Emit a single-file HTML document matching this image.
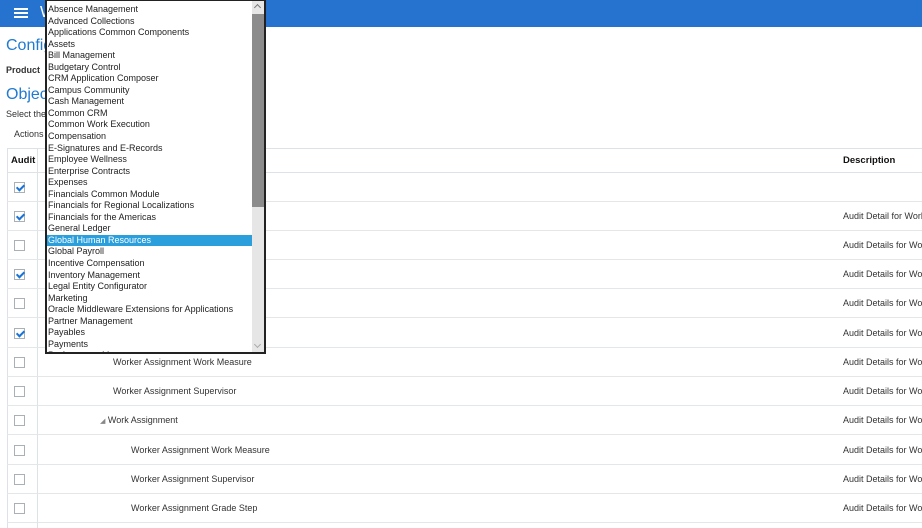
<!DOCTYPE html>
<html><head><style>
*{margin:0;padding:0;box-sizing:border-box}
body{width:922px;height:528px;overflow:hidden;background:#fff;font-family:"Liberation Sans",Arial,sans-serif;color:#333;position:relative}
.hdr{position:absolute;left:0;top:0;width:922px;height:27px;background:#2673cf}
.ham{position:absolute;left:14px;top:8px;width:14px;height:2px;background:#fff;box-shadow:0 4px 0 #fff,0 8px 0 #fff}
.t{position:absolute;white-space:nowrap}
.blue{color:#1f7ad1;font-size:16px}
.sm{font-size:9px;color:#333}
.row{position:absolute;left:7px;width:915px;height:29.2px;border-bottom:1px solid #e4e7ea}
.cb{position:absolute;left:7px;top:9px;width:11px;height:11px;border:1px solid #a9b0b6;background:#fff}
.cb.on::after{content:"";position:absolute;left:3px;top:0px;width:3px;height:6px;border:solid #1a73d6;border-width:0 2px 2px 0;transform:rotate(45deg)}
.nm{position:absolute;top:9px;font-size:9px;color:#333;white-space:nowrap}
.ds{position:absolute;left:836px;top:9px;font-size:9px;color:#333;white-space:nowrap}
.dd{position:absolute;left:45px;top:0;width:221px;height:354px;border:2px solid #222;border-top:1px solid #222;background:#fff;overflow:hidden}
.dd .it{height:11.55px;line-height:11.55px;font-size:9px;color:#222;padding-left:1px;white-space:nowrap;width:206px}
.dd .sel{background:#2a9fdc;color:#fff}
.sb{position:absolute;right:0;top:0;width:12px;height:352px;background:#e6e6e6}
.th{position:absolute;left:0;top:13px;width:12px;height:193px;background:#8c8c8c}
</style></head><body>
<div class="hdr"><div class="ham"></div><div class="t" style="left:40px;top:4px;color:#fff;font-size:16px">W</div></div>
<div class="t blue" style="left:6px;top:37px">Configure</div>
<div class="t sm" style="left:6px;top:65px;font-weight:bold">Product</div>
<div class="t blue" style="left:6px;top:86px">Object</div>
<div class="t sm" style="left:6px;top:109px">Select the</div>
<div class="t sm" style="left:14px;top:129px">Actions</div>
<div style="position:absolute;left:7px;top:148px;width:915px;height:380px;border-left:1px solid #dde2e6;border-top:1px solid #dde2e6"></div>
<div style="position:absolute;left:37px;top:148px;width:1px;height:380px;background:#dde2e6"></div>
<div style="position:absolute;left:7px;top:148px;width:915px;height:25px;border-bottom:1px solid #dde2e6">
<div class="t" style="left:4px;top:7px;font-size:9.5px;font-weight:bold;color:#111">Audit</div>
<div class="t" style="left:836px;top:7px;font-size:9.5px;font-weight:bold;color:#111">Description</div></div>
<div class="row" style="top:173px"><div class="cb on"></div></div>
<div class="row" style="top:202px"><div class="cb on"></div><div class="ds">Audit Detail for Work</div></div>
<div class="row" style="top:231px"><div class="cb"></div><div class="ds">Audit Details for Wo</div></div>
<div class="row" style="top:260px"><div class="cb on"></div><div class="ds">Audit Details for Wo</div></div>
<div class="row" style="top:289px"><div class="cb"></div><div class="ds">Audit Details for Wo</div></div>
<div class="row" style="top:319px"><div class="cb on"></div><div class="ds">Audit Details for Wo</div></div>
<div class="row" style="top:348px"><div class="cb"></div><div class="nm" style="left:106px">Worker Assignment Work Measure</div><div class="ds">Audit Details for Wo</div></div>
<div class="row" style="top:377px"><div class="cb"></div><div class="nm" style="left:106px">Worker Assignment Supervisor</div><div class="ds">Audit Details for Wo</div></div>
<div class="row" style="top:406px"><div class="cb"></div><div class="nm" style="left:93px"><span style="font-size:7px;color:#888">◢</span> Work Assignment</div><div class="ds">Audit Details for Wo</div></div>
<div class="row" style="top:436px"><div class="cb"></div><div class="nm" style="left:124px">Worker Assignment Work Measure</div><div class="ds">Audit Details for Wo</div></div>
<div class="row" style="top:465px"><div class="cb"></div><div class="nm" style="left:124px">Worker Assignment Supervisor</div><div class="ds">Audit Details for Wo</div></div>
<div class="row" style="top:494px"><div class="cb"></div><div class="nm" style="left:124px">Worker Assignment Grade Step</div><div class="ds">Audit Details for Wo</div></div>
<div class="dd">
<div style="padding-top:3px">
<div class="it">Absence Management</div><div class="it">Advanced Collections</div><div class="it">Applications Common Components</div><div class="it">Assets</div><div class="it">Bill Management</div><div class="it">Budgetary Control</div><div class="it">CRM Application Composer</div><div class="it">Campus Community</div><div class="it">Cash Management</div><div class="it">Common CRM</div><div class="it">Common Work Execution</div><div class="it">Compensation</div><div class="it">E-Signatures and E-Records</div><div class="it">Employee Wellness</div><div class="it">Enterprise Contracts</div><div class="it">Expenses</div><div class="it">Financials Common Module</div><div class="it">Financials for Regional Localizations</div><div class="it">Financials for the Americas</div><div class="it">General Ledger</div><div class="it sel">Global Human Resources</div><div class="it">Global Payroll</div><div class="it">Incentive Compensation</div><div class="it">Inventory Management</div><div class="it">Legal Entity Configurator</div><div class="it">Marketing</div><div class="it">Oracle Middleware Extensions for Applications</div><div class="it">Partner Management</div><div class="it">Payables</div><div class="it">Payments</div><div class="it">Performance Management</div>
</div>
<div class="sb"><div class="th"></div>
<div style="position:absolute;left:3px;top:4px;width:5px;height:5px;border-left:1px solid #777;border-top:1px solid #777;transform:rotate(45deg)"></div>
<div style="position:absolute;left:3px;top:341px;width:5px;height:5px;border-right:1px solid #aaa;border-bottom:1px solid #aaa;transform:rotate(45deg)"></div>
</div></div>
</body></html>
